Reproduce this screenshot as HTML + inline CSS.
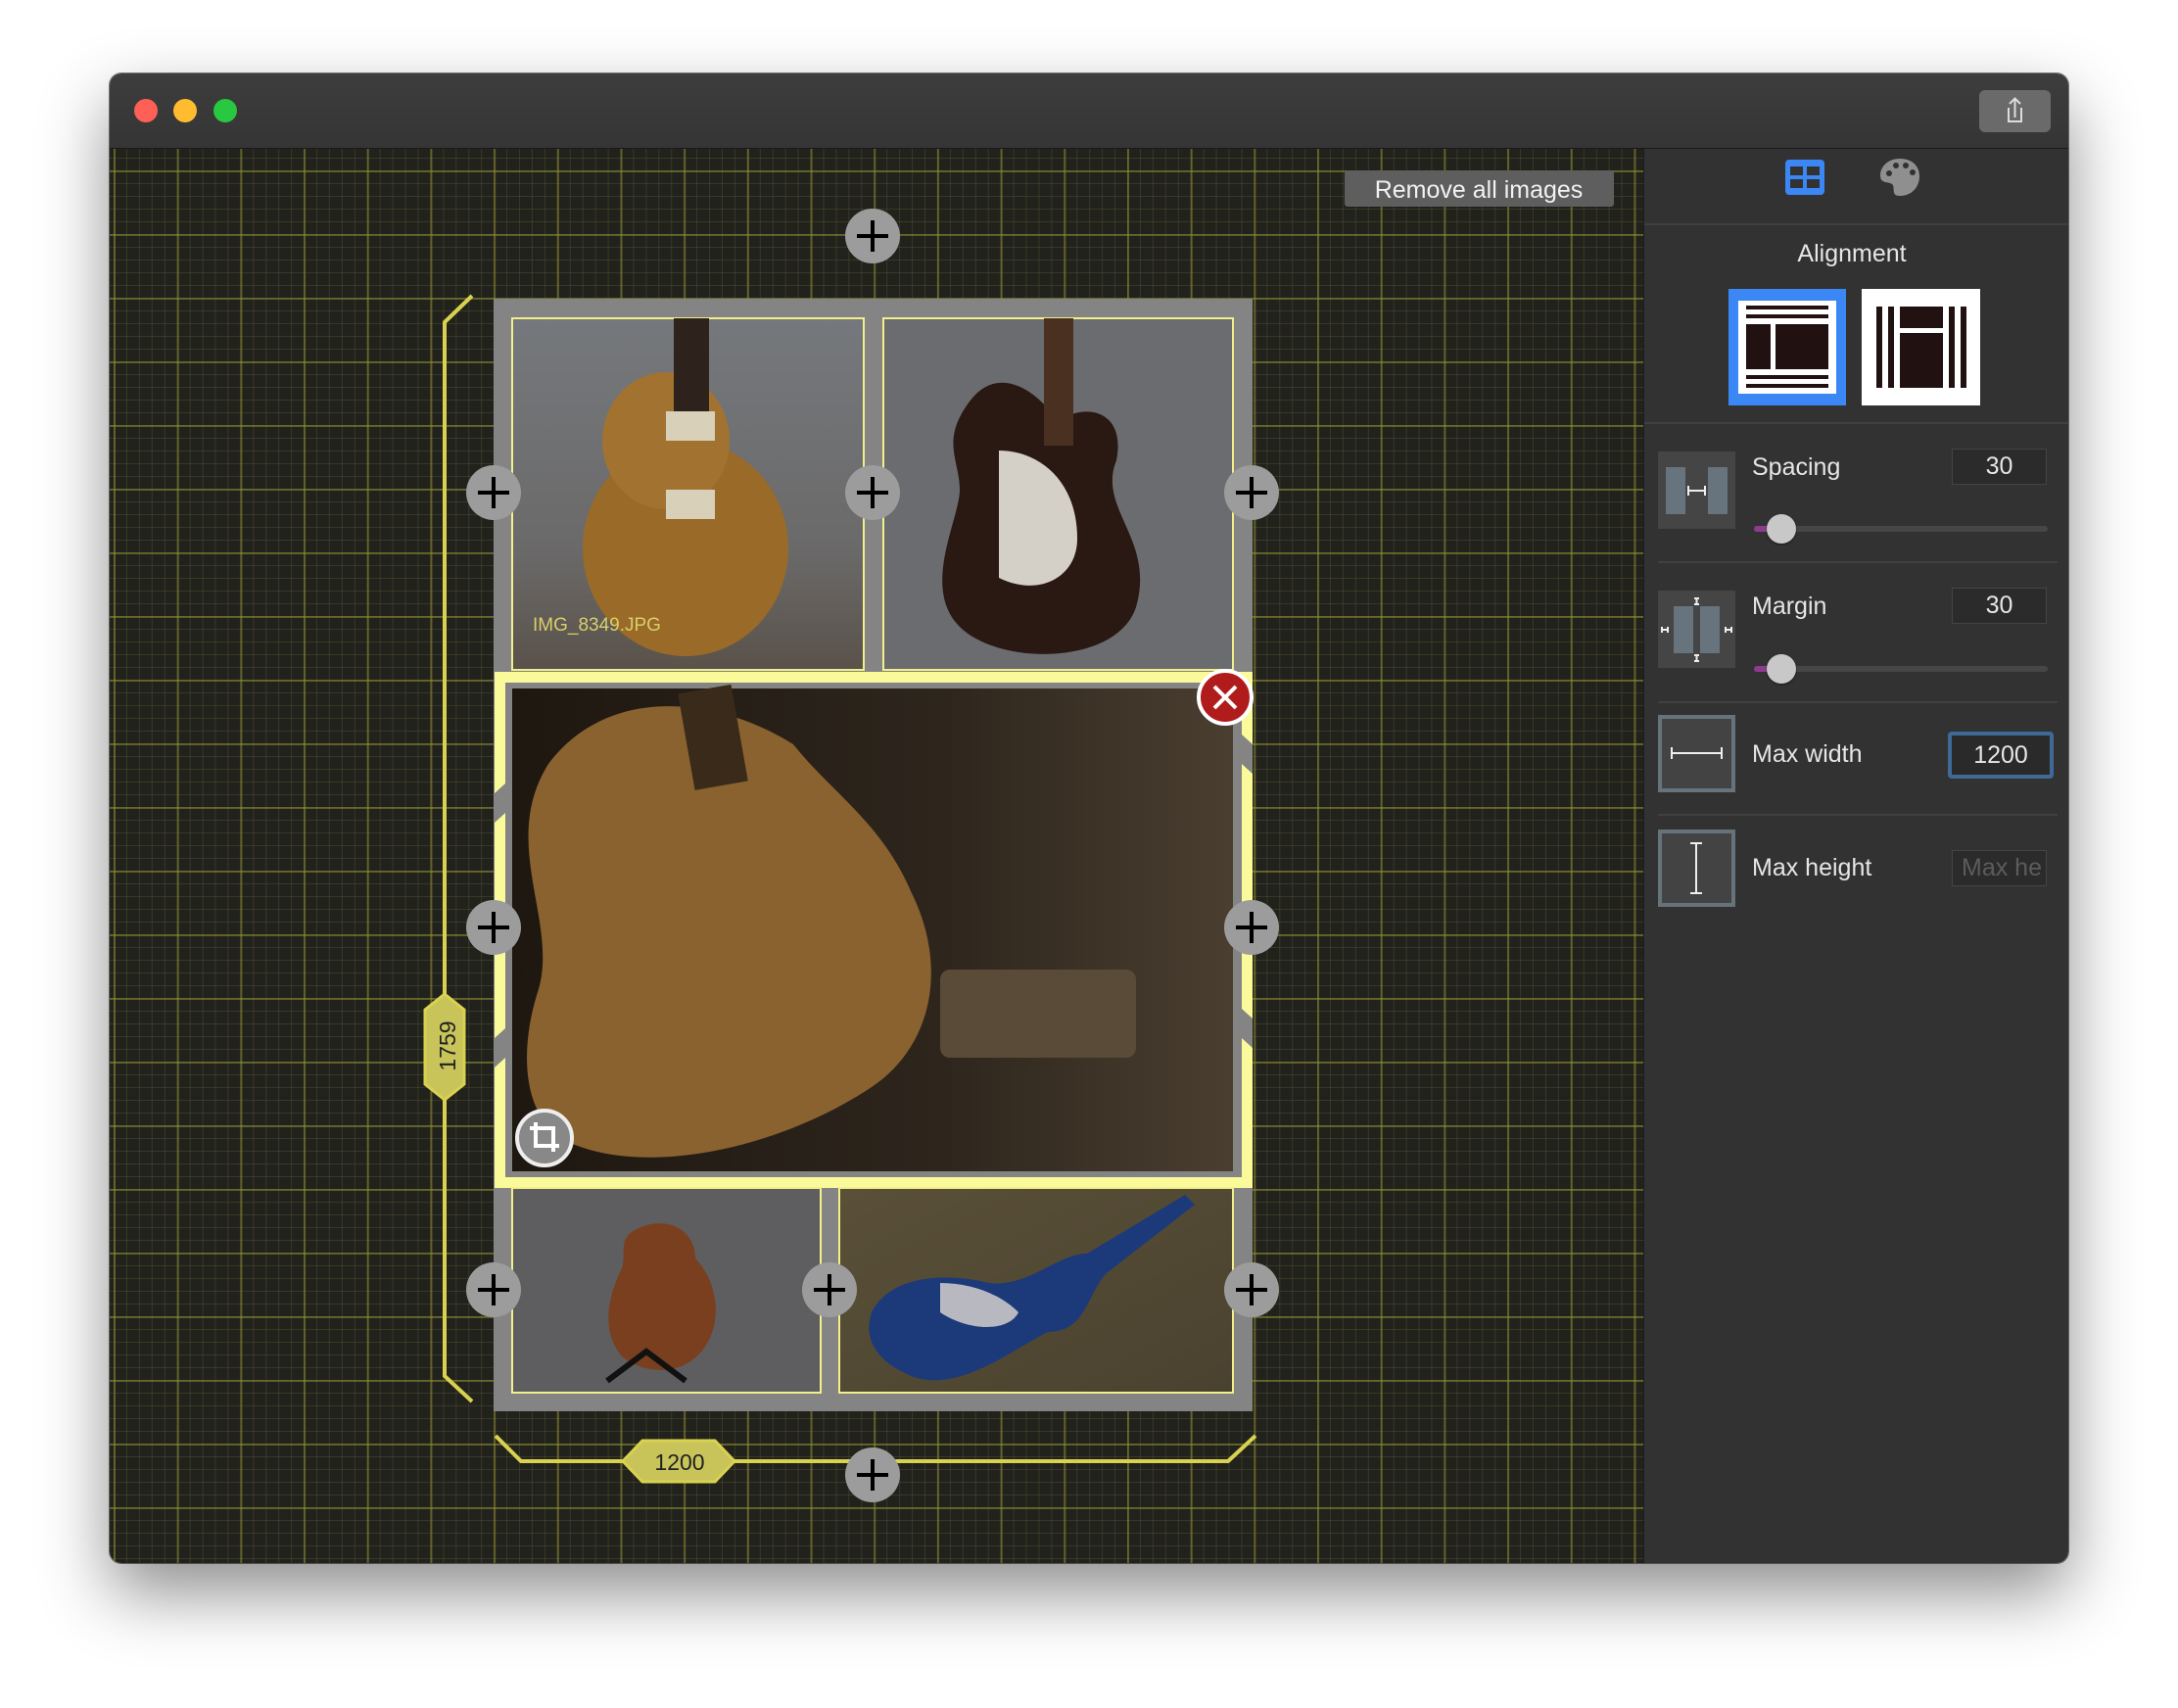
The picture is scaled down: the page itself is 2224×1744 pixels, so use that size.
<!DOCTYPE html>
<html><head><meta charset="utf-8"><style>
*{margin:0;padding:0;box-sizing:border-box}
body{width:2224px;height:1744px;background:#fff;position:relative;overflow:hidden;font-family:"Liberation Sans",sans-serif}
.win{position:absolute;left:112px;top:75px;width:2000px;height:1521px;border-radius:12px;overflow:hidden;box-shadow:0 30px 70px rgba(0,0,0,.45),0 0 0 1px rgba(0,0,0,.5)}
.title{position:absolute;left:0;top:0;width:2000px;height:77px;background:linear-gradient(#3d3d3d,#353535);border-bottom:1px solid #1a1a1a}
.dot{position:absolute;top:26px;width:24px;height:24px;border-radius:50%}
.canvas{position:absolute;left:0;top:77px;width:1566px;height:1444px;background-color:#22221c;
background-image:linear-gradient(90deg,rgba(150,150,50,.5) 2px,transparent 2px),linear-gradient(rgba(150,150,50,.5) 2px,transparent 2px),linear-gradient(90deg,rgba(110,110,70,.28) 1px,transparent 1px),linear-gradient(rgba(110,110,70,.28) 1px,transparent 1px);
background-size:64.7px 65px,64.7px 65px,12.94px 13px,12.94px 13px;background-position:4px 22px,4px 22px,4px 22px,4px 22px}
.side{position:absolute;left:1566px;top:77px;width:434px;height:1444px;background:#323232;border-left:1px solid #1c1c1c;color:#e4e4e4}
.lbl{position:absolute;font-size:25px;color:#e6e6e6}
.hr{position:absolute;left:14px;width:408px;height:2px;background:#404040}
.box{position:absolute;background:#2b2b2b;border:1px solid #444;font-size:25px;text-align:center;color:#e6e6e6}
.ic{position:absolute;left:14px;width:79px;height:79px;background:#454545}
.track{position:absolute;left:112px;width:300px;height:6px;border-radius:3px;background:#464646}
.thumb{position:absolute;width:30px;height:30px;border-radius:50%;background:#c8c8c8;box-shadow:0 1px 2px rgba(0,0,0,.5)}
</style></head><body>
<div class="win">
<div class="title">
<div class="dot" style="left:25px;background:#fe5f57"></div>
<div class="dot" style="left:65px;background:#febc2e"></div>
<div class="dot" style="left:106px;background:#28c840"></div>
<div style="position:absolute;left:1909px;top:17px;width:73px;height:43px;border-radius:6px;background:#6a6a6a">
<svg width="73" height="43"><path d="M30 18v14h13V18" fill="none" stroke="#ddd" stroke-width="2"/><path d="M36.5 28V9M31 14l5.5-5.5L42 14" fill="none" stroke="#ddd" stroke-width="2"/></svg></div>
</div>
<div class="canvas"></div>
<div class="side">
<svg style="position:absolute;left:143px;top:10px" width="42" height="38" viewBox="0 0 42 38"><rect x="1" y="1" width="40" height="36" rx="4" fill="#3a87f5"/><rect x="6" y="8" width="13" height="9" fill="#323232"/><rect x="23" y="8" width="13" height="9" fill="#323232"/><rect x="6" y="21" width="13" height="9" fill="#323232"/><rect x="23" y="21" width="13" height="9" fill="#323232"/></svg>
<svg style="position:absolute;left:240px;top:8px" width="42" height="42" viewBox="0 0 42 42"><path d="M21 2C9 2 1 10 1 19c0 9 8 6 12 9s-2 12 8 12c12 0 20-9 20-20S33 2 21 2z" fill="#8f8f8f"/><circle cx="10" cy="17" r="3" fill="#323232"/><circle cx="17" cy="9" r="3" fill="#323232"/><circle cx="27" cy="9" r="3" fill="#323232"/><circle cx="34" cy="16" r="3" fill="#323232"/></svg>
<div class="hr" style="top:76px;left:0;width:434px"></div>
<div class="lbl" style="left:0;width:434px;text-align:center;top:93px;padding-right:10px">Alignment</div>
<div style="position:absolute;left:86px;top:143px;width:120px;height:119px;background:#3a87f5;padding:12px 10px"><div style="background:#fff;width:100%;height:100%;position:relative">
<svg width="100" height="95" viewBox="0 0 100 95"><rect x="8" y="5" width="84" height="4" fill="#211"/><rect x="8" y="14" width="84" height="4" fill="#211"/><rect x="8" y="24" width="25" height="46" fill="#211"/><rect x="38" y="24" width="54" height="46" fill="#211"/><rect x="8" y="76" width="84" height="4" fill="#211"/><rect x="8" y="85" width="84" height="4" fill="#211"/></svg></div></div>
<div style="position:absolute;left:222px;top:143px;width:121px;height:119px;background:#fff">
<svg width="121" height="119" viewBox="0 0 121 119"><rect x="15" y="18" width="6" height="83" fill="#211"/><rect x="27" y="18" width="6" height="83" fill="#211"/><rect x="39" y="18" width="44" height="22" fill="#211"/><rect x="39" y="45" width="44" height="56" fill="#211"/><rect x="89" y="18" width="6" height="83" fill="#211"/><rect x="101" y="18" width="6" height="83" fill="#211"/></svg></div>
<div class="hr" style="top:279px;left:0;width:434px"></div>
<div class="ic" style="top:309px"><svg width="79" height="79"><rect x="8" y="16" width="20" height="48" fill="#67747d"/><rect x="51" y="16" width="20" height="48" fill="#67747d"/><path d="M31 40h17M31 35v10M48 35v10" stroke="#eee" stroke-width="2"/></svg></div>
<div class="lbl" style="left:110px;top:311px">Spacing</div>
<div class="box" style="left:314px;top:306px;width:97px;height:37px;line-height:35px">30</div>
<div class="track" style="top:385px"></div><div style="position:absolute;left:112px;top:385px;width:20px;height:6px;border-radius:3px;background:#8c3c8c"></div>
<div class="thumb" style="left:125px;top:373px"></div>
<div class="hr" style="top:421px"></div>
<div class="ic" style="top:451px"><svg width="79" height="79"><rect x="16" y="16" width="20" height="48" fill="#67747d"/><rect x="43" y="16" width="20" height="48" fill="#67747d"/><path d="M37 8h5M37 14h5M39.5 8v6M37 66h5M37 72h5M39.5 66v6M4 37v6M10 37v6M4 40h6M69 37v6M75 37v6M69 40h6" stroke="#eee" stroke-width="2"/></svg></div>
<div class="lbl" style="left:110px;top:453px">Margin</div>
<div class="box" style="left:314px;top:448px;width:97px;height:37px;line-height:35px">30</div>
<div class="track" style="top:528px"></div><div style="position:absolute;left:112px;top:528px;width:20px;height:6px;border-radius:3px;background:#8c3c8c"></div>
<div class="thumb" style="left:125px;top:516px"></div>
<div class="hr" style="top:564px"></div>
<div class="ic" style="top:578px;border:4px solid #66737b;background:#434343"><svg width="71" height="71"><path d="M10 35h51M10 29v12M61 29v12" stroke="#eee" stroke-width="2"/></svg></div>
<div class="lbl" style="left:110px;top:604px">Max width</div>
<div class="box" style="left:310px;top:595px;width:108px;height:48px;line-height:40px;border:4px solid #3f6a98;border-radius:4px;background:#2a2a2a">1200</div>
<div class="hr" style="top:679px"></div>
<div class="ic" style="top:695px;border:4px solid #66737b;background:#434343"><svg width="71" height="71"><path d="M35 10v51M29 10h12M29 61h12" stroke="#eee" stroke-width="2"/></svg></div>
<div class="lbl" style="left:110px;top:720px">Max height</div>
<div class="box" style="left:314px;top:716px;width:97px;height:37px;line-height:35px;color:#5c5c5c;overflow:hidden;text-align:left;padding-left:9px;white-space:nowrap">Max he</div>
</div>
</div>

<svg style="position:absolute;left:0;top:0" width="2224" height="1744" viewBox="0 0 2224 1744">
<defs>
<linearGradient id="g1" x1="0" y1="0" x2="0" y2="1"><stop offset="0" stop-color="#75787c"/><stop offset=".65" stop-color="#6b6a6a"/><stop offset="1" stop-color="#5a524a"/></linearGradient>
<linearGradient id="g3" x1="0" y1="0" x2="1" y2="0"><stop offset="0" stop-color="#1e1710"/><stop offset=".6" stop-color="#2e261d"/><stop offset="1" stop-color="#4a3e30"/></linearGradient>
<linearGradient id="g5" x1="0" y1="0" x2="1" y2="1"><stop offset="0" stop-color="#5a5038"/><stop offset="1" stop-color="#4a4230"/></linearGradient>
</defs>
<rect x="1373" y="174" width="275" height="37" rx="3" fill="#5e5e5e"/>
<text x="1510" y="202" font-size="25" fill="#f2f2f2" text-anchor="middle" font-family="Liberation Sans">Remove all images</text>
<g stroke="#d8d250" stroke-width="4" fill="none">
<path d="M482 302L454 329V1088" /><path d="M454 1088V1405L482 1431"/>
<path d="M506 1466L532 1492H658M738 1492H1254L1282 1466"/>
</g>
<path d="M454 1015l20 16v76l-20 16l-20-16v-76z" fill="#c8c45a" stroke="#d8d250" stroke-width="3"/>
<text transform="translate(465 1068) rotate(-90)" font-size="23" fill="#222" text-anchor="middle" font-family="Liberation Sans">1759</text>
<path d="M636 1492l20-21h74l20 21l-20 21h-74z" fill="#c8c45a" stroke="#d8d250" stroke-width="3"/>
<text x="694" y="1501" font-size="23" fill="#222" text-anchor="middle" font-family="Liberation Sans">1200</text>
<rect x="504" y="305" width="775" height="1136" fill="#848484"/>
<rect x="523" y="325" width="359" height="359" fill="url(#g1)" stroke="#f3ef8a" stroke-width="2"/>
<ellipse cx="700" cy="560" rx="105" ry="110" fill="#9a6a28"/><ellipse cx="680" cy="450" rx="65" ry="70" fill="#a27330"/>
<rect x="688" y="325" width="36" height="120" fill="#2e221c"/>
<rect x="680" y="420" width="50" height="30" fill="#d8d0b8"/><rect x="680" y="500" width="50" height="30" fill="#d8d0b8"/>
<text x="544" y="644" font-size="19" fill="#d8cf6a" font-family="Liberation Sans">IMG_8349.JPG</text>
<rect x="902" y="325" width="357" height="359" fill="#6a6c70" stroke="#f3ef8a" stroke-width="2"/>
<path d="M990 410c30-40 70-10 90 20c30-20 70-10 60 40c-20 50 40 80 20 150c-20 60-140 60-180 20c-40-40 0-110 0-140c0-30-20-50 10-90z" fill="#2a1812"/>
<path d="M1020 460c40 0 80 30 80 90c0 40-40 60-80 40z" fill="#d4d0c8"/>
<rect x="1066" y="325" width="30" height="130" fill="#4a3020"/>
<rect x="505" y="686" width="774" height="527" fill="#fafa9a"/>
<rect x="516" y="697" width="752" height="505" fill="#848484"/>
<rect x="523" y="703" width="736" height="493" fill="url(#g3)"/>
<path d="M560 780c60-80 170-70 250-20c40 50 90 80 120 150c40 80 20 160-40 200c-90 60-220 90-300 60c-60-20-60-100-40-160c20-70-40-150 10-230z" fill="#8a6230"/>
<rect x="700" y="703" width="55" height="100" fill="#3a2a1a" transform="rotate(-10 727 750)"/>
<rect x="960" y="990" width="200" height="90" rx="10" fill="#5a4a38"/>
<rect x="523" y="1213" width="315" height="209" fill="#5e5e60" stroke="#f3ef8a" stroke-width="2"/>
<path d="M650 1255c30-15 60 0 60 30c20 20 30 60 10 90c-20 30-60 30-85 10c-25-30-10-70 0-90c5-15-5-30 15-40z" fill="#7a3f1e"/>
<path d="M620 1410l40-30l40 30" stroke="#111" stroke-width="6" fill="none"/>
<rect x="857" y="1213" width="402" height="209" fill="url(#g5)" stroke="#f3ef8a" stroke-width="2"/>
<path d="M890 1340c20-40 80-40 120-30c40 5 70-30 100-30l100-60l10 10l-90 70c-20 20-20 60-60 60c-40 20-100 70-150 40c-20-10-40-30-30-60z" fill="#1c3a7a"/>
<path d="M960 1310c30 0 60 10 80 30c-10 20-50 20-80 0z" fill="#b8b8c0"/>
<path d="M505 810l11-10v30l-11 10zM505 1060l11-10v30l-11 10zM1279 760l-11-10v30l11 10zM1279 1040l-11-10v30l11 10z" fill="#848484"/>
<path d="M882 696l9-9l9 9zM882 1203l9 9l9-9z" fill="#fafa9a"/>
<circle cx="1251" cy="712" r="27" fill="#b01c1c" stroke="#fff" stroke-width="4"/>
<path d="M1240 701l22 22M1262 701l-22 22" stroke="#fff" stroke-width="4"/>
<circle cx="556" cy="1162" r="28" fill="#888" stroke="#eee" stroke-width="4"/>
<path d="M547 1146v24h24M541 1152h24v24" stroke="#fff" stroke-width="4" fill="none"/>
<g fill="#9c9c9c"><circle cx="891" cy="241" r="28"/><circle cx="504" cy="503" r="28"/><circle cx="891" cy="503" r="28"/><circle cx="1278" cy="503" r="28"/><circle cx="504" cy="947" r="28"/><circle cx="1278" cy="947" r="28"/><circle cx="504" cy="1317" r="28"/><circle cx="847" cy="1317" r="28"/><circle cx="1278" cy="1317" r="28"/><circle cx="891" cy="1506" r="28"/></g>
<g stroke="#000" stroke-width="4"><path d="M875 241h32M891 225v32M488 503h32M504 487v32M875 503h32M891 487v32M1262 503h32M1278 487v32M488 947h32M504 931v32M1262 947h32M1278 931v32M488 1317h32M504 1301v32M831 1317h32M847 1301v32M1262 1317h32M1278 1301v32M875 1506h32M891 1490v32"/></g>
</svg>
</body></html>
